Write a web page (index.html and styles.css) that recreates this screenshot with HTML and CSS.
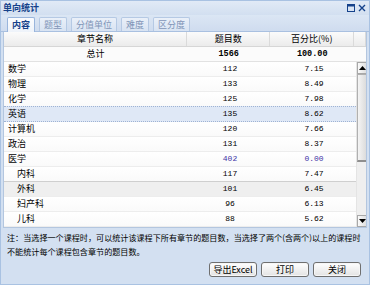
FILE: index.html
```html
<!DOCTYPE html>
<html>
<head>
<meta charset="utf-8">
<link rel="stylesheet" href="styles.css">
</head>
<body>
<div class="win">
  <div class="titlebar">
    <span class="title">单向统计</span>
    <span class="tools">
      <svg width="8" height="8" viewBox="0 0 8 8"><rect x="0.5" y="0.5" width="7" height="7" fill="none" stroke="#15428b"/><rect x="1" y="1" width="6" height="1.5" fill="#15428b"/></svg>
      <svg width="8" height="8" viewBox="0 0 8 8"><path d="M1 1L7 7M7 1L1 7" stroke="#15428b" stroke-width="1.4"/></svg>
    </span>
  </div>
  <div class="tabs">
    <div class="tab active">内容</div>
    <div class="tab">题型</div>
    <div class="tab">分值单位</div>
    <div class="tab">难度</div>
    <div class="tab">区分度</div>
  </div>
  <div class="grid">
    <div class="ghead">
      <div class="c name">章节名称</div>
      <div class="c num">题目数</div>
      <div class="c pct">百分比(%)</div>
      <div class="c sc"></div>
    </div>
    <div class="gtotal">
      <div class="c name center">总计</div>
      <div class="c num mono b">1566</div>
      <div class="c pct mono b">100.00</div>
      <div class="c sc"></div>
    </div>
    <div class="gbody">
      <div class="rows">
        <div class="row"><div class="c name">数学</div><div class="c num mono">112</div><div class="c pct mono">7.15</div></div>
        <div class="row"><div class="c name">物理</div><div class="c num mono">133</div><div class="c pct mono">8.49</div></div>
        <div class="row"><div class="c name">化学</div><div class="c num mono">125</div><div class="c pct mono">7.98</div></div>
        <div class="row sel"><div class="c name">英语</div><div class="c num mono">135</div><div class="c pct mono">8.62</div></div>
        <div class="row"><div class="c name">计算机</div><div class="c num mono">120</div><div class="c pct mono">7.66</div></div>
        <div class="row"><div class="c name">政治</div><div class="c num mono">131</div><div class="c pct mono">8.37</div></div>
        <div class="row parent"><div class="c name">医学</div><div class="c num mono">402</div><div class="c pct mono">0.00</div></div>
        <div class="row child dark"><div class="c name">内科</div><div class="c num mono">117</div><div class="c pct mono">7.47</div></div>
        <div class="row child alt"><div class="c name">外科</div><div class="c num mono">101</div><div class="c pct mono">6.45</div></div>
        <div class="row child"><div class="c name">妇产科</div><div class="c num mono">96</div><div class="c pct mono">6.13</div></div>
        <div class="row child"><div class="c name">儿科</div><div class="c num mono">88</div><div class="c pct mono">5.62</div></div>
      </div>
      <div class="vscroll">
        <div class="arrow up"><svg width="7" height="4" viewBox="0 0 7 4"><path d="M0 4L3.5 0L7 4Z" fill="#000"/></svg></div>
        <div class="thumb"></div>
        <div class="track"></div>
        <div class="arrow down"><svg width="7" height="4" viewBox="0 0 7 4"><path d="M0 0L3.5 4L7 0Z" fill="#000"/></svg></div>
      </div>
    </div>
  </div>
  <div class="note">注：当选择一个课程时，可以统计该课程下所有章节的题目数，当选择了两个(含两个)以上的课程时不能统计每个课程包含章节的题目数。</div>
  <div class="btns">
    <button class="btn">导出Excel</button>
    <button class="btn">打印</button>
    <button class="btn">关闭</button>
  </div>
</div>
</body>
</html>
```

FILE: styles.css
```css
* { box-sizing: border-box; }
html, body { margin: 0; padding: 0; }
body {
  width: 370px;
  height: 285px;
  overflow: hidden;
  font-family: "Noto Sans CJK SC", "Liberation Sans", sans-serif;
  font-size: 9px;
  color: #000;
}
.win {
  width: 370px;
  height: 285px;
  background: #d3e0f1;
  border: 1px solid #a9c2e2;
  display: flex;
  flex-direction: column;
}
.titlebar {
  height: 14px;
  flex: none;
  display: flex;
  align-items: center;
  justify-content: space-between;
  padding: 0 3px 0 2px;
  background: linear-gradient(#e1eaf6, #d2dff0);
}
.title {
  font-weight: bold;
  color: #15428b;
  line-height: 14px;
}
.tools { display: flex; gap: 3px; align-items: center; }
.tools svg { display: block; }
.tabs {
  height: 17px;
  flex: none;
  display: flex;
  align-items: flex-end;
  gap: 4px;
  padding: 0 0 0 6px;
  background: linear-gradient(#dbe6f4, #cfdcef);
  border-bottom: 1px solid #a9c0e0;
}
.tab {
  height: 14px;
  padding: 0 4px;
  line-height: 13px;
  border: 1px solid #b5c9e4;
  border-bottom: none;
  border-radius: 2px 2px 0 0;
  background: linear-gradient(#eaf0f9, #d8e3f2);
  color: #7f95b8;
}
.tab.active {
  background: linear-gradient(#fbfcfe, #eef3fa);
  color: #15428b;
  font-weight: bold;
  border-color: #99b5dc;
  height: 15px;
  margin-bottom: -1px;
}
.grid {
  margin: 0 2px;
  background: #fff;
  border: 1px solid #b3c6df;
  border-top: none;
  flex: none;
}
.ghead, .gtotal, .row { display: flex; }
.ghead {
  height: 15px;
  background: linear-gradient(#fbfbfb, #ebebeb);
  border-bottom: 1px solid #d6d6d6;
}
.ghead .c { border-right: 1px solid #dadada; text-align: center; line-height: 14px; }
.gtotal {
  height: 15px;
  border-bottom: 1px solid #e2e2e2;
  background: #fbfbfb;
}
.c { line-height: 14px; white-space: nowrap; overflow: hidden; }
.name { width: 184px; padding-left: 4px; }
.ghead .name, .center { text-align: center; padding-left: 0; }
.num { width: 84px; text-align: center; }
.pct { width: 84px; text-align: center; }
.sc { width: 12px; flex: none; }
.mono {
  font-family: "Liberation Mono", "DejaVu Sans Mono", monospace;
  font-size: 8px;
}
.b { font-weight: bold; font-size: 8.5px; }
.gbody { display: flex; height: 165px; overflow: hidden; }
.rows { width: 352px; }
.row {
  height: 15px;
  border-bottom: 1px solid #ededed;
  background: linear-gradient(#ffffff, #fafafa);
}
.row.sel {
  background: #dfe8f6;
  border-top: 1px dotted #9fb3d3;
  border-bottom: 1px dotted #9fb3d3;
  margin-top: -1px;
  height: 16px;
}
.row.parent .num, .row.parent .pct { color: #3d34a6; }
.row.child .name { padding-left: 13px; }
.row.dark { border-bottom-color: #cfcfcf; }
.row.alt { background: #efefef; }
.vscroll {
  width: 12px;
  flex: none;
  display: flex;
  flex-direction: column;
  background: #f1f1f1;
  border-left: 1px solid #e4e4e4;
}
.arrow {
  height: 12px;
  flex: none;
  display: flex;
  align-items: center;
  justify-content: center;
  background: linear-gradient(90deg, #fafafa, #dcdcdc);
  border: 1px solid #a8a8a8;
}
.thumb {
  height: 88px;
  flex: none;
  background: linear-gradient(90deg, #f4f4f4, #d9d9d9);
  border: 1px solid #b0b0b0;
  border-bottom: 2px solid #8f8f8f;
}
.track { flex: 1; background: #efefef; }
.note {
  padding: 3px 2px 0 6px;
  font-size: 8.1px;
  line-height: 13.5px;
  height: 33px;
  flex: none;
  color: #000;
}
.btns {
  display: flex;
  justify-content: flex-end;
  gap: 4px;
  padding: 1px 8px 0 0;
}
.btn {
  width: 48px;
  height: 15px;
  padding: 0;
  font-family: inherit;
  font-size: 9px;
  line-height: 12px;
  color: #000;
  border: 1px solid #6f6f6f;
  border-radius: 3px;
  background: linear-gradient(#ffffff, #e3e3e3);
  box-shadow: inset 0 0 0 1px #f6f6f6;
}
```
